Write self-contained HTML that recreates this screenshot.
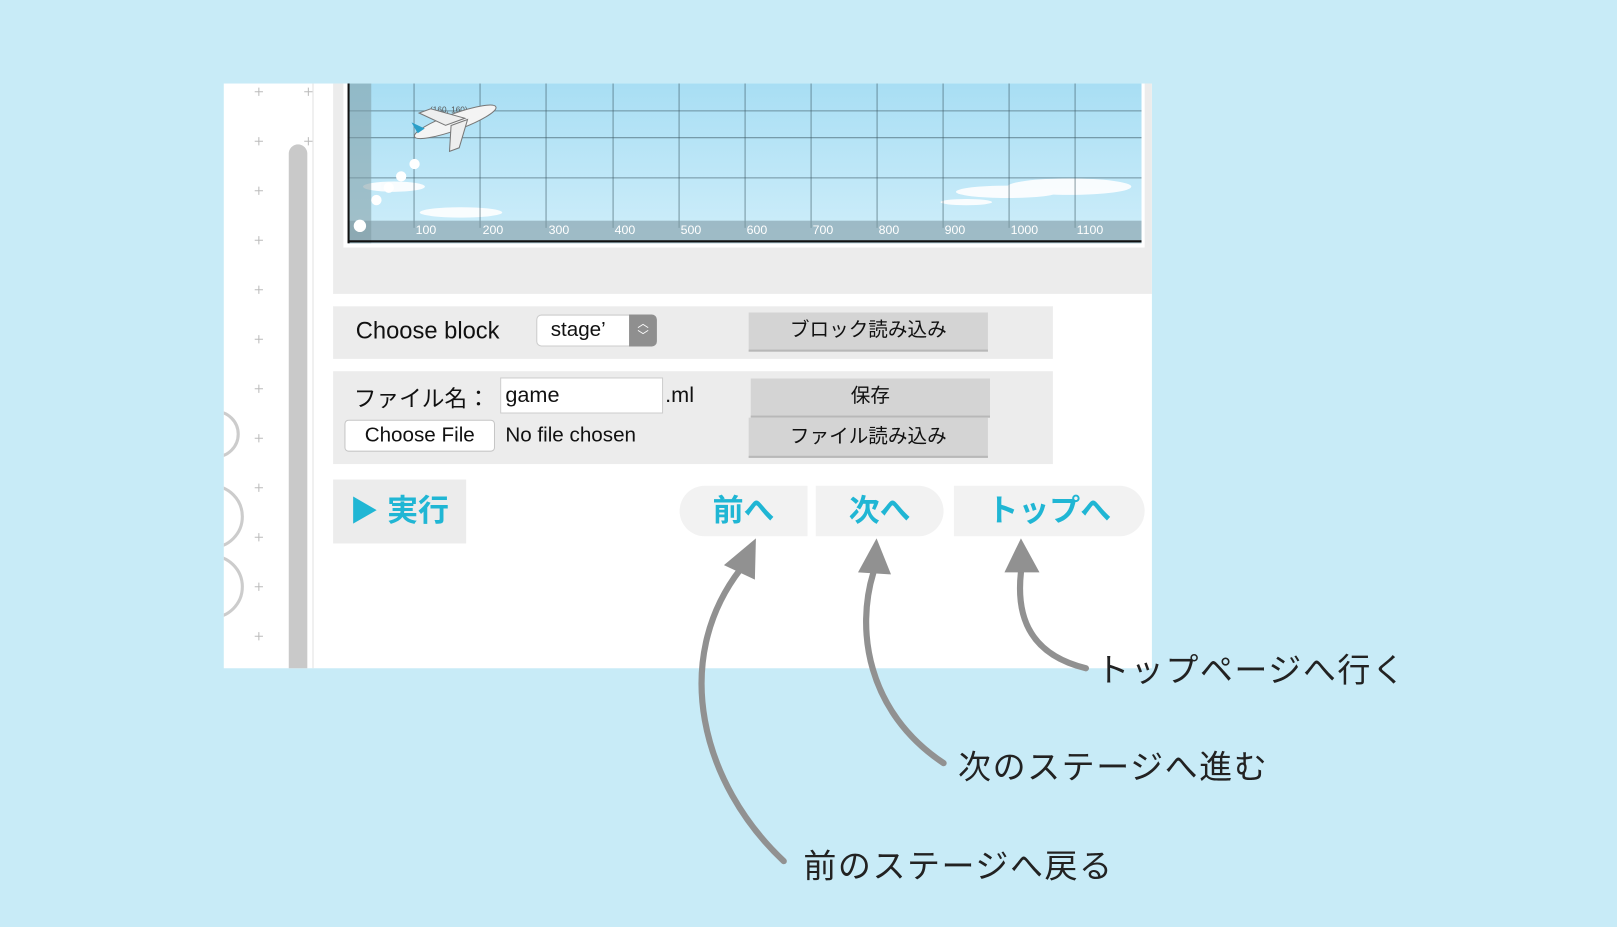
<!DOCTYPE html>
<html><head><meta charset="utf-8"><style>
html,body{margin:0;padding:0;width:1617px;height:927px;overflow:hidden;background:#c8ebf7;}
#w{position:absolute;left:0;top:0;width:1568px;height:899px;transform:scale(1.03125);transform-origin:0 0;font-family:"Liberation Sans","Noto Sans CJK JP",sans-serif;}
.a{position:absolute;}
.btn{position:absolute;background:#d4d4d4;border-bottom:2px solid #b8b8b8;font-size:19px;text-align:center;color:#111;}
.nav{position:absolute;background:#f2f2f2;color:#20b6d4;font-weight:bold;font-size:30px;text-align:center;line-height:49px;}
.lbl{position:absolute;font-size:32px;color:#222;white-space:nowrap;letter-spacing:1.5px;}
</style></head><body><div id="w">
<div class="a" style="left:217px;top:81px;width:900px;height:567px;background:#fff;"></div>
<div class="a" style="left:303px;top:81px;width:1px;height:567px;background:#e2e2e2;"></div>
<div class="a" style="left:280px;top:140px;width:18px;height:508px;background:#c9c9c9;border-radius:9px 9px 0 0;"></div>
<svg class="a" style="left:217px;top:81px" width="90" height="567">
<g stroke="#bbb" stroke-width="1">
<path d="M34 4v8M30 8h8 M34 52v8M30 56h8 M34 100v8M30 104h8 M34 148v8M30 152h8 M34 196v8M30 200h8 M34 244v8M30 248h8 M34 292v8M30 296h8 M34 340v8M30 344h8 M34 388v8M30 392h8 M34 436v8M30 440h8 M34 484v8M30 488h8 M34 532v8M30 536h8"/>
<path d="M82 4v8M78 8h8 M82 52v8M78 56h8"/>
</g>
<g fill="none" stroke="#ccc" stroke-width="3"><circle cx="-8" cy="340" r="22"/><circle cx="-12" cy="420" r="30"/><circle cx="-12" cy="488" r="30"/></g>
</svg>
<div class="a" style="left:323px;top:81px;width:794px;height:204px;background:#ececec;"></div>
<div class="a" style="left:333px;top:81px;width:777px;height:159px;background:#fff;"></div>
<svg class="a" style="left:337px;top:81px" width="770" height="155">
<defs><linearGradient id="sk" x1="0" y1="0" x2="0" y2="1"><stop offset="0" stop-color="#a8def4"/><stop offset="1" stop-color="#cfeefa"/></linearGradient></defs>
<rect width="770" height="155" fill="url(#sk)"/>
<g fill="#fff" opacity=".9"><ellipse cx="45" cy="100" rx="30" ry="5"/><ellipse cx="110" cy="125" rx="40" ry="5"/><ellipse cx="640" cy="105" rx="50" ry="6"/><ellipse cx="700" cy="100" rx="60" ry="8"/><ellipse cx="600" cy="115" rx="25" ry="3"/></g>
<g stroke="#3d5a66" stroke-opacity=".6" stroke-width="1">
<path d="M64.5 0v140M128.5 0v140M192.5 0v140M257.5 0v140M321.5 0v140M385.5 0v140M449.5 0v140M513.5 0v140M577.5 0v140M641.5 0v140M705.5 0v140"/>
<path d="M0 26.5h770M0 52.5h770M0 91.5h770"/>
</g>
<rect x="0" y="0" width="23" height="155" fill="#7e9aa3" opacity=".55"/>
<rect x="0" y="133" width="770" height="22" fill="#7e9aa3" opacity=".6"/>
<path d="M0 153h770" stroke="#111" stroke-width="2"/>
<path d="M1 0v155" stroke="#111" stroke-width="2"/>
<g fill="#fff" font-size="12" font-family="Liberation Sans"><text x="66" y="146">100</text><text x="131" y="146">200</text><text x="195" y="146">300</text><text x="259" y="146">400</text><text x="323" y="146">500</text><text x="387" y="146">600</text><text x="451" y="146">700</text><text x="515" y="146">800</text><text x="579" y="146">900</text><text x="643" y="146">1000</text><text x="707" y="146">1100</text></g>
<text x="80" y="28" font-size="8" fill="#555">(160, 160)</text>
<g fill="#fff"><circle cx="65" cy="78" r="5"/><circle cx="52" cy="90" r="5"/><circle cx="40" cy="101" r="5"/><circle cx="28" cy="113" r="5"/><circle cx="12" cy="138" r="6"/></g>
<g transform="translate(60,32) rotate(-20)">
<ellipse cx="40" cy="20" rx="42" ry="8" fill="#f4f4f4" stroke="#777"/>
<path d="M30 20 L10 0 L22 0 L50 20 Z M35 22 L25 45 L35 45 L52 22Z" fill="#eee" stroke="#777"/>
<path d="M2 18 L0 6 L10 16Z" fill="#2a9fc9"/>
</g>
</svg>
<div class="a" style="left:323px;top:297px;width:698px;height:51px;background:#ececec;"></div>
<div class="a" style="left:345px;top:307px;font-size:23px;color:#111;">Choose block</div>
<div class="a" style="left:520px;top:305px;width:116px;height:31px;background:#fff;border:1px solid #ccc;border-radius:5px;box-sizing:border-box;"></div>
<div class="a" style="left:534px;top:309px;font-size:20px;color:#111;">stage’</div>
<div class="a" style="left:610px;top:305px;width:27px;height:31px;background:#8f8f8f;border-radius:0 5px 5px 0;color:#fff;font-size:11px;line-height:12px;text-align:center;padding-top:3px;box-sizing:border-box;">︿<br>﹀</div>
<div class="btn" style="left:726px;top:303px;width:232px;height:36px;line-height:36px;">ブロック読み込み</div>
<div class="a" style="left:323px;top:360px;width:698px;height:90px;background:#ececec;"></div>
<div class="a" style="left:343px;top:369px;font-size:22px;color:#111;">ファイル名：</div>
<div class="a" style="left:485px;top:366px;width:158px;height:35px;background:#fff;border:1px solid #ccc;box-sizing:border-box;"></div>
<div class="a" style="left:490px;top:372px;font-size:21px;color:#111;">game</div>
<div class="a" style="left:645px;top:372px;font-size:21px;color:#111;">.ml</div>
<div class="btn" style="left:728px;top:367px;width:232px;height:36px;line-height:36px;">保存</div>
<div class="btn" style="left:726px;top:405px;width:232px;height:37px;line-height:37px;">ファイル読み込み</div>
<div class="a" style="left:334px;top:407px;width:146px;height:31px;background:#fff;border:1px solid #c6c6c6;border-radius:4px;box-sizing:border-box;font-size:20px;text-align:center;line-height:29px;color:#111;">Choose File</div>
<div class="a" style="left:490px;top:411px;font-size:20px;color:#111;">No file chosen</div>
<div class="a" style="left:323px;top:465px;width:129px;height:62px;background:#ececec;color:#20b6d4;font-weight:bold;font-size:30px;line-height:62px;"><span style="margin-left:16px;font-size:28px">▶</span> 実行</div>
<div class="nav" style="left:659px;top:471px;width:124px;border-radius:25px 0 0 25px;">前へ</div>
<div class="nav" style="left:791px;top:471px;width:124px;border-radius:0 25px 25px 0;">次へ</div>
<div class="nav" style="left:925px;top:471px;width:185px;border-radius:0 25px 25px 0;">トップへ</div>
<svg class="a" style="left:0;top:0" width="1568" height="899">
<g fill="none" stroke="#919191" stroke-width="6" stroke-linecap="round">
<path d="M760 835 C 680 760, 650 640, 718 552"/>
<path d="M915 740 C 840 690, 830 610, 847 555"/>
<path d="M1053 648 C 1000 635, 985 600, 990 555"/>
</g>
<g fill="#919191">
<path d="M733 522 L702 548 L732 562Z"/>
<path d="M850 522 L832 555 L864 557Z"/>
<path d="M990 522 L974 555 L1008 555Z"/>
</g>
</svg>
<div class="lbl" style="left:1063px;top:625px;">トップページへ行く</div>
<div class="lbl" style="left:929px;top:719px;">次のステージへ進む</div>
<div class="lbl" style="left:779px;top:815px;">前のステージへ戻る</div>
</div></body></html>
